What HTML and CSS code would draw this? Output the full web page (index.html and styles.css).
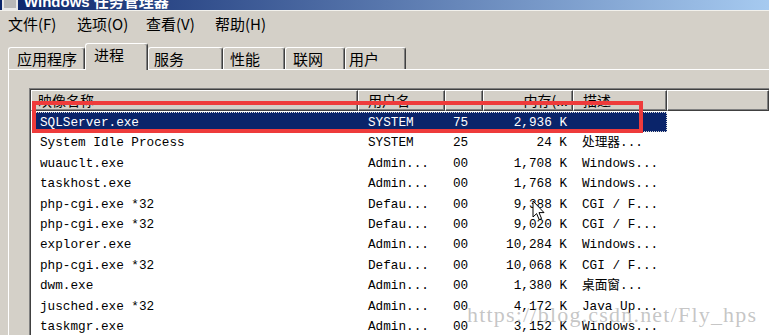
FILE: index.html
```html
<!DOCTYPE html>
<html lang="zh-CN">
<head>
    <meta charset="UTF-8">
    <meta name="viewport" content="width=device-width, initial-scale=1.0">
    <title>Windows 任务管理器</title>
    <link rel="stylesheet" href="styles.css">
</head>
<body>
    <div class="window">
        <div class="titlebar">
            <span class="app-icon"></span>
            <span class="title">Windows 任务管理器</span>
        </div>
        <div class="menubar">
            <span class="menu-item">文件(F)</span>
            <span class="menu-item">选项(O)</span>
            <span class="menu-item">查看(V)</span>
            <span class="menu-item">帮助(H)</span>
        </div>
        <div class="tabs">
            <div class="tab">应用程序</div>
            <div class="tab active">进程</div>
            <div class="tab">服务</div>
            <div class="tab">性能</div>
            <div class="tab">联网</div>
            <div class="tab">用户</div>
        </div>
        <div class="pane">
            <div class="listview">
                <div class="lv-head">
                    <div class="th">映像名称</div>
                    <div class="th">用户名</div>
                    <div class="th th-cpu">–</div>
                    <div class="th th-num">内存(...</div>
                    <div class="th">描述</div>
                    <div class="th"></div>
                </div>
                <div class="lv-body">
                    <div class="row selected"><span>SQLServer.exe</span><span>SYSTEM</span><span>75</span><span class="num">2,936 K</span><span></span></div>
                    <div class="row"><span>System Idle Process</span><span>SYSTEM</span><span>25</span><span class="num">24 K</span><span>处理器...</span></div>
                    <div class="row"><span>wuauclt.exe</span><span>Admin...</span><span>00</span><span class="num">1,708 K</span><span>Windows...</span></div>
                    <div class="row"><span>taskhost.exe</span><span>Admin...</span><span>00</span><span class="num">1,768 K</span><span>Windows...</span></div>
                    <div class="row"><span>php-cgi.exe *32</span><span>Defau...</span><span>00</span><span class="num">9,388 K</span><span>CGI / F...</span></div>
                    <div class="row"><span>php-cgi.exe *32</span><span>Defau...</span><span>00</span><span class="num">9,020 K</span><span>CGI / F...</span></div>
                    <div class="row"><span>explorer.exe</span><span>Admin...</span><span>00</span><span class="num">10,284 K</span><span>Windows...</span></div>
                    <div class="row"><span>php-cgi.exe *32</span><span>Defau...</span><span>00</span><span class="num">10,068 K</span><span>CGI / F...</span></div>
                    <div class="row"><span>dwm.exe</span><span>Admin...</span><span>00</span><span class="num">1,380 K</span><span>桌面窗...</span></div>
                    <div class="row"><span>jusched.exe *32</span><span>Admin...</span><span>00</span><span class="num">4,172 K</span><span>Java Up...</span></div>
                    <div class="row"><span>taskmgr.exe</span><span>Admin...</span><span>00</span><span class="num">3,152 K</span><span>Windows...</span></div>
                </div>
            </div>
        </div>

        <!-- annotation drawn over the screenshot -->
        <div class="mark-box"></div>
        <svg class="cursor" width="13" height="21" viewBox="0 0 13 21">
            <path d="M1 1 L1 17 L4.6 13.6 L7.2 19.6 L9.6 18.6 L7 12.6 L12 12.6 Z" fill="#fff" stroke="#000" stroke-width="1" stroke-linejoin="miter"/>
        </svg>
        <div class="watermark">https://blog.csdn.net/Fly_hps</div>
    </div>
</body>
</html>
```

FILE: styles.css
```css
body {
    margin: 0;
    background-color: #d4d0c8;
    font-family: "Noto Sans CJK SC", sans-serif;
    color: #000;
}
.window {
    position: relative;
    width: 769px;
    height: 335px;
    overflow: hidden;
}
.titlebar {
    height: 10px;
    display: flex;
    align-items: flex-end;
    gap: 6px;
    padding-left: 2px;
    overflow: hidden;
    background: linear-gradient(to right, #0a246a, #a6caf0);
    border-bottom: 1px solid #f2f1ec;
}
.app-icon {
    width: 16px;
    height: 14px;
    flex: none;
    background-color: #b8b8b8;
    border: 2px solid #e8e8e8;
    box-sizing: border-box;
}
.title {
    font-family: "Liberation Sans", "Noto Sans CJK SC", sans-serif;
    font-weight: bold;
    font-size: 15px;
    line-height: 15px;
    color: #fff;
    white-space: nowrap;
    padding-bottom: 1px;
}
.menubar {
    display: flex;
    height: 26px;
    padding-left: 8px;
    font-size: 15px;
    line-height: 26px;
}
.menu-item {
    width: 69px;
    flex: none;
}
.tabs {
    display: flex;
    align-items: flex-end;
    height: 32px;
    padding-left: 8px;
}
.tab {
    height: 22px;
    box-sizing: border-box;
    flex: none;
    border-top: 1px solid #fff;
    border-left: 1px solid #fff;
    border-right: 1px solid #404040;
    box-shadow: inset -1px 0 0 #808080;
    border-radius: 3px 3px 0 0;
    padding-left: 8px;
    font-size: 15px;
    line-height: 21px;
}
.tab:nth-child(1) { width: 77px; }
.tab:nth-child(2) { width: 63px; }
.tab:nth-child(3) { width: 75px; padding-left: 5px; }
.tab:nth-child(4) { width: 62px; padding-left: 6px; }
.tab:nth-child(5) { width: 60px; padding-left: 7px; }
.tab:nth-child(6) { width: 61px; padding-left: 3px; }
.tab.active {
    position: relative;
    z-index: 1;
    height: 27px;
    margin-bottom: -1px;
    background-color: #d4d0c8;
    line-height: 22px;
}
.pane {
    margin-left: 8px;
    border-top: 1px solid #fff;
    border-left: 1px solid #fff;
    padding: 18px 0 0 20px;
    height: 300px;
}
.listview {
    background-color: #fff;
    border-top: 1px solid #808080;
    border-left: 1px solid #808080;
    box-shadow: inset 1px 1px 0 #404040;
    padding: 1px 0 0 1px;
    height: 100%;
}
.lv-head {
    display: grid;
    grid-template-columns: 327px 87px 38px 90px 94px 1fr;
    height: 21px;
}
.th {
    box-sizing: border-box;
    background-color: #d4d0c8;
    border-top: 1px solid #fff;
    border-left: 1px solid #fff;
    border-right: 1px solid #404040;
    border-bottom: 1px solid #404040;
    box-shadow: inset -1px -1px 0 #808080;
    font-size: 14px;
    line-height: 19px;
    padding-left: 6px;
    white-space: nowrap;
    overflow: hidden;
}
.th:nth-child(2), .th:nth-child(5) { padding-left: 9px; }
.th-cpu {
    color: #555;
    padding-left: 5px;
    line-height: 22px;
}
.th-num {
    text-align: right;
    padding: 0 4px 0 0;
}
.lv-body {
    padding: 1px 0 0 2px;
}
.row {
    display: grid;
    grid-template-columns: 325px 87px 38px 90px 94px;
    width: 634px;
    height: 20.4px;
    line-height: 21.4px;
    font-family: "Liberation Mono", "Noto Sans CJK SC", monospace;
    font-size: 12.7px;
    white-space: nowrap;
}
.row span { padding-left: 9px; }
.row span:first-child { padding-left: 7px; }
.row span:nth-child(2) { padding-left: 10px; }
.row span:nth-child(3) { padding-left: 8px; }
.row span.num {
    padding: 0 6px 0 0;
    text-align: right;
}
.row.selected {
    background-color: #0a246a;
    color: #fff;
    outline: 1px dotted #d8d8d8;
    outline-offset: -1px;
}
.mark-box {
    position: absolute;
    left: 32px;
    top: 101px;
    width: 611px;
    height: 32px;
    box-sizing: border-box;
    border: 4px solid #ee3b3b;
}
.cursor {
    position: absolute;
    left: 532px;
    top: 200px;
}
.watermark {
    position: absolute;
    left: 467px;
    top: 304px;
    font-family: "Liberation Serif", serif;
    font-size: 22px;
    line-height: 22px;
    letter-spacing: 1.2px;
    color: rgba(160, 160, 160, 0.6);
    white-space: nowrap;
}
```
